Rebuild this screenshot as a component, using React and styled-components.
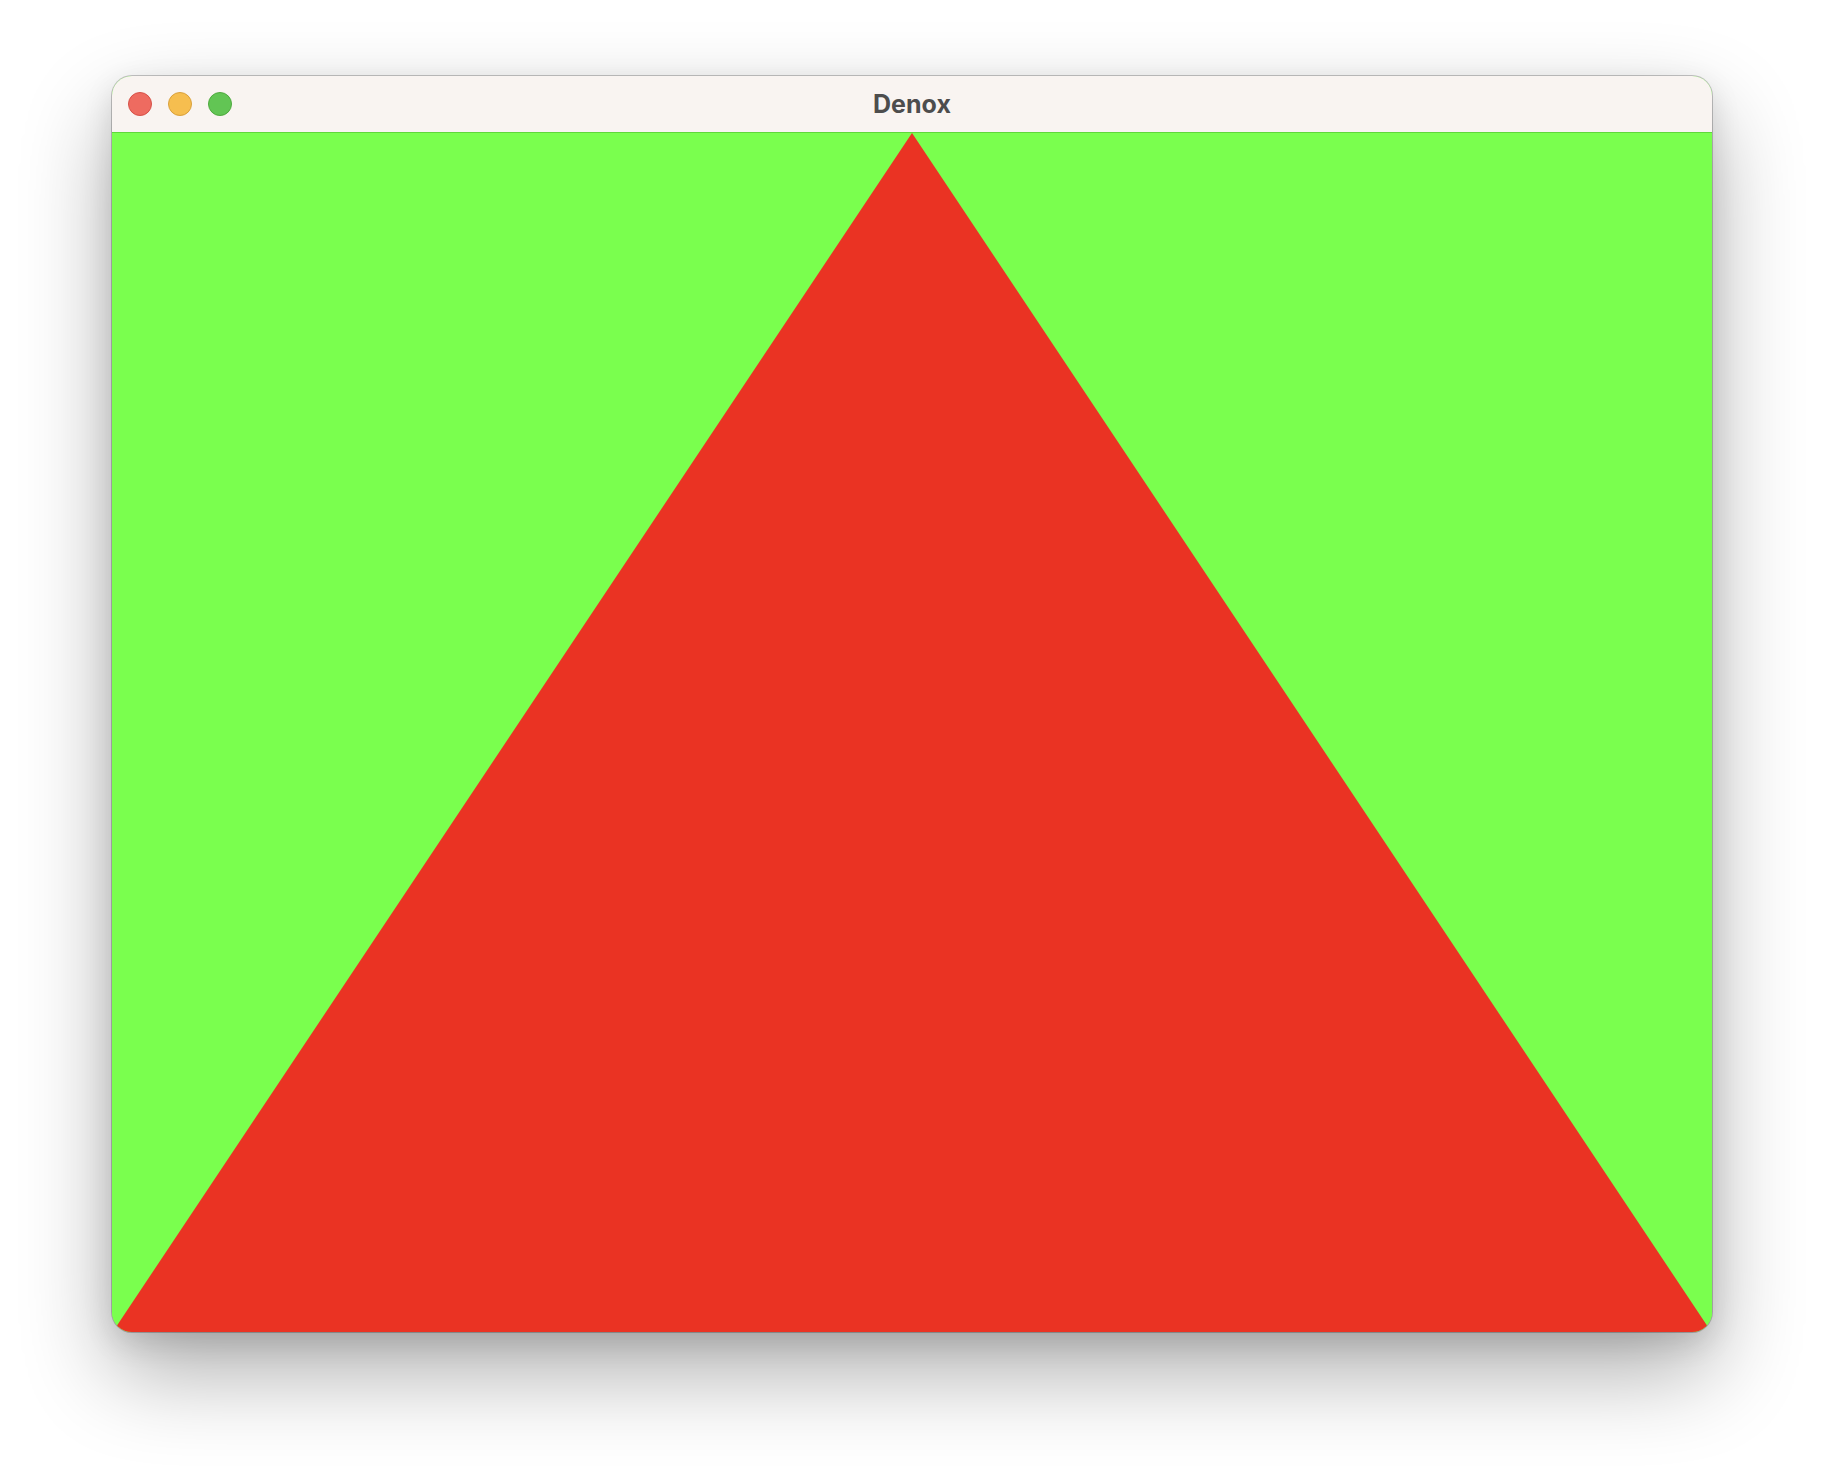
import React from 'react';
import styled, { createGlobalStyle } from 'styled-components';

const Global = createGlobalStyle`
  html, body {
    margin: 0;
    background: #ffffff;
  }
`

const Page = styled.div`
  display: flex;
  justify-content: center;
  padding-top: 76px;
  height: 1480px;
  box-sizing: border-box;
`

const Window = styled.div`
  width: 1600px;
  height: 1256px;
  border-radius: 20px;
  overflow: hidden;
  display: flex;
  flex-direction: column;
  background: #7aff4e;
  box-shadow: 0 0 0 1px rgba(0, 0, 0, 0.22), 0 40px 90px rgba(0, 0, 0, 0.32), 0 10px 30px rgba(0, 0, 0, 0.12);
`

const TitleBar = styled.div`
  height: 56px;
  flex: none;
  background: #f9f4f1;
  border-bottom: 1px solid #5fd83a;
  display: flex;
  align-items: center;
  position: relative;
  padding-left: 16px;
  gap: 16px;
`

const Light = styled.span`
  width: 24px;
  height: 24px;
  border-radius: 50%;
  box-sizing: border-box;
  background: ${p => p.color};
  border: 1px solid ${p => p.edge};
`

const Title = styled.div`
  position: absolute;
  left: 0;
  right: 0;
  text-align: center;
  font-family: Inter, "Liberation Sans", sans-serif;
  font-weight: 700;
  font-size: 25px;
  color: #4d4d4d;
  pointer-events: none;
`

const Canvas = styled.div`
  flex: 1;
  display: flex;
  > svg {
    width: 100%;
    height: 100%;
    display: block;
  }
`

function App() {
  return (
    <>
      <Global />
      <Page>
        <Window>
          <TitleBar>
            <Light color="#ee6b60" edge="#d65148" />
            <Light color="#f6be4f" edge="#d9a03c" />
            <Light color="#62c554" edge="#4fa93f" />
            <Title>Denox</Title>
          </TitleBar>
          <Canvas>
            <svg viewBox="0 0 1600 1200" preserveAspectRatio="none">
              <rect x="0" y="0" width="1600" height="1200" fill="#7aff4e" />
              <polygon points="800,0 0,1200 1600,1200" fill="#ea3323" />
            </svg>
          </Canvas>
        </Window>
      </Page>
    </>
  );
}

export default App;
